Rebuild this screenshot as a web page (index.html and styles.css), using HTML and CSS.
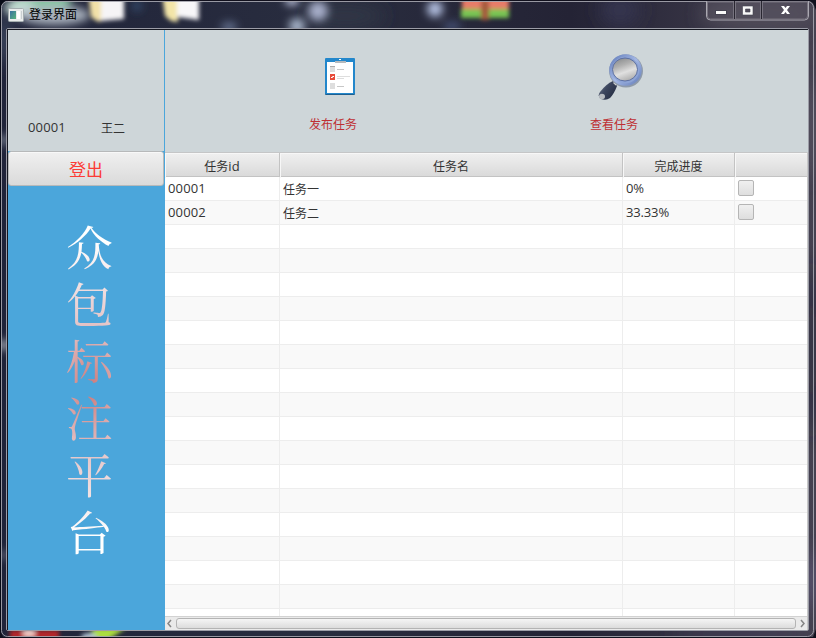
FILE: index.html
```html
<!DOCTYPE html>
<html lang="zh-CN">
<head>
<meta charset="utf-8">
<title>登录界面</title>
<link rel="stylesheet" href="styles.css">
</head>
<body>
<div class="window">
  <svg class="backdrop" width="816" height="638" viewBox="0 0 816 638">
    <defs>
      <filter id="b2" x="-50%" y="-50%" width="200%" height="200%"><feGaussianBlur stdDeviation="2"/></filter>
      <filter id="b4" x="-50%" y="-50%" width="200%" height="200%"><feGaussianBlur stdDeviation="4"/></filter>
      <filter id="b10" x="-50%" y="-100%" width="200%" height="300%"><feGaussianBlur stdDeviation="9"/></filter>
      <linearGradient id="bg"><stop offset="0" stop-color="#20243a"/><stop offset=".4" stop-color="#292d3f"/><stop offset=".7" stop-color="#242335"/><stop offset="1" stop-color="#454150"/></linearGradient>
    </defs>
    <rect width="816" height="638" fill="url(#bg)"/>
    <g filter="url(#b10)">
      <ellipse cx="620" cy="10" rx="20" ry="16" fill="#353450"/>
      <ellipse cx="760" cy="14" rx="60" ry="18" fill="#504b58"/>
      <ellipse cx="345" cy="16" rx="40" ry="10" fill="#303746"/>
      <ellipse cx="812" cy="130" rx="6" ry="50" fill="#5a5464"/>
      <ellipse cx="740" cy="634" rx="70" ry="5" fill="#45405c"/>
      <ellipse cx="812" cy="580" rx="6" ry="30" fill="#5f587b"/>
      <ellipse cx="4" cy="40" rx="6" ry="25" fill="#4c5870"/>
      <ellipse cx="812" cy="350" rx="5" ry="90" fill="#242235"/>
    </g>
    <g filter="url(#b4)">
      <ellipse cx="42" cy="0" rx="30" ry="10" fill="#7cc59a"/>
      <ellipse cx="20" cy="8" rx="16" ry="8" fill="#c6ded5"/>
      <ellipse cx="54" cy="15" rx="36" ry="10" fill="#b6bfca" opacity=".9"/>
      <circle cx="318" cy="11" r="10" fill="#a7afca"/>
      <circle cx="297" cy="26" r="8" fill="#a8b5ca"/>
      <circle cx="435" cy="9" r="8" fill="#b8c5e6"/>
      <ellipse cx="229" cy="27" rx="8" ry="5" fill="#64718f"/>
      <ellipse cx="292" cy="1" rx="7" ry="4" fill="#dce3ff"/>
      <ellipse cx="452" cy="26" rx="9" ry="4" fill="#48557b"/>
      <circle cx="137" cy="6" r="5" fill="#344e70"/>
      <circle cx="4" cy="345" r="5" fill="#c0c5cd"/>
      <circle cx="4" cy="140" r="5" fill="#818a9a"/>
      <circle cx="4" cy="555" r="4" fill="#777c8d"/>
    </g>
    <g filter="url(#b2)">
      <path d="M88 -6h17v26l-7 2-7-5z" fill="#f2e1a8"/>
      <path d="M101 -6h23v25l-23 2z" fill="#f6f4f6"/>
      <path d="M162 -6h16v28l-7-1-6-5z" fill="#f3e5a8"/>
      <path d="M177 -6h22v26l-22-3z" fill="#f8f7f9"/>
      <rect x="462" y="-4" width="47" height="14" fill="#e87b69"/>
      <rect x="461" y="9" width="48" height="9" fill="#79c553"/>
      <rect x="481" y="0" width="8" height="20" fill="#a45a3e"/>
      <rect x="10" y="630" width="49" height="10" fill="#b3282a"/>
      <ellipse cx="29" cy="633" rx="7" ry="4" fill="#f2cbc5"/>
      <path d="M83 640l12-12h31l-18 12z" fill="#acdd3f"/>
      <ellipse cx="89" cy="637" rx="8" ry="4" fill="#afc1d2"/>
    </g>
    <rect x="0" y="0" width="816" height="1" fill="#11101d"/>
    <path d="M0 0h6L1 6v632H0z" fill="#080b17"/>
    <path d="M0 638v-8l3 7h810l3-8v9zM816 0v10l-3-7-5-3z" fill="#10101d"/>
    <rect x="1.5" y="1.5" width="812" height="635" rx="6" fill="none" stroke="#a5a5ae" opacity=".9"/>
    <rect x="6.5" y="28.5" width="802" height="602" rx="1.5" fill="none" stroke="#9c9da7"/>
    <rect x="7.5" y="29.5" width="800" height="600" fill="none" stroke="#151720"/>
  </svg>

  <header class="titlebar">
    <svg class="app-icon" width="16" height="14" viewBox="0 0 16 14">
      <defs><linearGradient id="ai" x2="1" y2="1"><stop stop-color="#3971a1"/><stop offset="1" stop-color="#56b47c"/></linearGradient></defs>
      <rect x=".5" y=".5" width="15" height="13" rx="1" fill="#e9ecec" stroke="#a5aeb0"/>
      <rect x="2" y="3" width="6" height="8" fill="url(#ai)"/>
      <path d="M9 3h3v8H9z" fill="#fff"/><path d="M13 3h1v8h-1z" fill="#c9cfd1"/>
    </svg>
    <span class="title">登录界面</span>
    <svg class="controls" width="106" height="22" viewBox="0 0 106 22">
      <path d="M1.500 1v15q0 4 4 4h94q4 0 4-4V1" fill="#5c5665" fill-opacity=".35" stroke="#aaa8b1"/>
      <path d="M2.500 2v14q0 3 3 3h23V2zM30.500 2v17h25V2zM57.500 2v17h42q3 0 3-3V2z" fill="none" stroke="#77737f"/>
      <path d="M29.500 1v18M56.500 1v18" stroke="#292631"/>
      <rect x="10.500" y="10.500" width="11" height="4" fill="#f8f8f8" stroke="#454351"/>
      <path d="M37.500 6h10.500v9H37.500zm3 3v3h4.500V9z" fill="#f8f8f8" fill-rule="evenodd" stroke="#454351" stroke-width=".6"/>
      <path d="M76 6h3l1.500 2L82 6h3l-3 4 3 4h-3l-1.500-2-1.500 2h-3l3-4z" fill="#fff"/>
    </svg>
  </header>

  <main class="client">
    <aside class="sidebar">
      <div class="user"><span class="num">00001</span><span>王二</span></div>
      <button class="logout">登出</button>
      <div class="brand"><div class="brand-text">众包标注平台</div></div>
    </aside>
    <section class="content">
      <nav class="toolbar">
        <div class="action publish">
          <svg width="30" height="38" viewBox="0 0 30 38">
            <rect width="30" height="36" rx="1" y="1" fill="#1d5f90"/>
            <rect width="30" height="36" rx="1" fill="#2387cb"/>
            <path d="M2 4h26v31H2z" fill="#fff"/>
            <path d="M10 3h11v2H10z" fill="#b6babd"/><path d="M14 1h2v1h-2z" fill="#fff"/>
            <path d="M5 8h5v6H5zM5 25h5v6H5z" fill="#dedede"/><path d="M5 8h5v1H5z" fill="#aaa"/>
            <path d="M5 16h5v6H5z" fill="#e74c3c"/><path d="M6 19.500h1.500v-1H9" fill="none" stroke="#fff"/>
            <path d="M12 11h7v1h-7zM12 28h7v1h-7z" fill="#c7c7c7"/><path d="M12 18h13v1H12zM12 20h7v1h-7z" fill="#dedede"/>
          </svg>
          <span>发布任务</span>
        </div>
        <div class="action view">
          <svg width="46" height="48" viewBox="0 0 46 48">
            <defs>
              <linearGradient id="ring" x2="1" y2="1"><stop stop-color="#627dbc"/><stop offset=".5" stop-color="#a5b8e4"/><stop offset="1" stop-color="#647eba"/></linearGradient>
              <linearGradient id="lens" x1=".3" x2=".7" y2="1"><stop stop-color="#8b8d8f"/><stop offset=".3" stop-color="#b0b0b0"/><stop offset=".6" stop-color="#e0e0e0"/><stop offset="1" stop-color="#a9a9a9"/></linearGradient>
              <linearGradient id="handle" x2="1" y2=".7"><stop stop-color="#8790a3"/><stop offset=".45" stop-color="#3d475f"/><stop offset="1" stop-color="#252d42"/></linearGradient>
            </defs>
            <path d="M15 28l4 5q-3 8-7 12-4 3-9 1-4-3-1-7 6-8 13-11z" fill="url(#handle)"/>
            <ellipse cx="4" cy="43.500" rx="3" ry="2.700" fill="#b7bbc0"/>
            <path d="M16 29l2.500 2.500" stroke="#d4d4d4" stroke-width="2.500"/>
            <ellipse cx="28" cy="18" rx="17" ry="16.500" fill="#8e9aa9"/>
            <ellipse cx="27.500" cy="17" rx="15" ry="14.500" fill="#8da4d6" stroke="url(#ring)" stroke-width="2.500"/>
            <ellipse cx="27" cy="16.500" rx="12.500" ry="11.500" fill="url(#lens)" stroke="#5c70a3" stroke-width="1"/>
          </svg>
          <span>查看任务</span>
        </div>
      </nav>
      <div class="table">
        <div class="row head"><div>任务<span class="num">id</span></div><div>任务名</div><div>完成进度</div><div></div></div>
        <div class="rows">
          <div class="row"><div class="num">00001</div><div>任务一</div><div class="num pct">0%</div><div><i class="check"></i></div></div>
          <div class="row"><div class="num">00002</div><div>任务二</div><div class="num pct">33.33%</div><div><i class="check"></i></div></div>
          <div class="row"><div></div><div></div><div></div><div></div></div>
          <div class="row"><div></div><div></div><div></div><div></div></div>
          <div class="row"><div></div><div></div><div></div><div></div></div>
          <div class="row"><div></div><div></div><div></div><div></div></div>
          <div class="row"><div></div><div></div><div></div><div></div></div>
          <div class="row"><div></div><div></div><div></div><div></div></div>
          <div class="row"><div></div><div></div><div></div><div></div></div>
          <div class="row"><div></div><div></div><div></div><div></div></div>
          <div class="row"><div></div><div></div><div></div><div></div></div>
          <div class="row"><div></div><div></div><div></div><div></div></div>
          <div class="row"><div></div><div></div><div></div><div></div></div>
          <div class="row"><div></div><div></div><div></div><div></div></div>
          <div class="row"><div></div><div></div><div></div><div></div></div>
          <div class="row"><div></div><div></div><div></div><div></div></div>
          <div class="row"><div></div><div></div><div></div><div></div></div>
          <div class="row"><div></div><div></div><div></div><div></div></div>
          <div class="row"><div></div><div></div><div></div><div></div></div>
        </div>
        <div class="scrollbar">
          <svg width="10" height="13" viewBox="0 0 10 13"><path d="M6 3L3 6.500 6 10" fill="none" stroke="#858585" stroke-width="1.500"/></svg>
          <div class="thumb"></div>
          <svg width="10" height="13" viewBox="0 0 10 13"><path d="M4 3l3 3.500L4 10" fill="none" stroke="#858585" stroke-width="1.500"/></svg>
        </div>
      </div>
    </section>
  </main>
</div>
</body>
</html>
```
FILE: styles.css
```css
* { box-sizing: border-box; }
body {
  margin: 0;
  overflow: hidden;
  font: 12px/16px "Noto Sans CJK SC", sans-serif;
  color: #333;
}
.window { position: relative; width: 816px; height: 638px; padding: 0 8px; overflow: hidden; }
.backdrop { position: absolute; left: 0; top: 0; }
.titlebar { position: relative; height: 30px; display: flex; align-items: flex-start; }
.app-icon { margin-top: 8px; }
.title { margin: 6px 0 0 5px; color: #000; }
.controls { margin-left: auto; margin-right: -3px; }
.num { font-family: "Open Sans", "Noto Sans", sans-serif; font-size: 13px; letter-spacing: .15px; }
.pct { letter-spacing: -.15px; }

.client { position: relative; display: flex; width: 800px; height: 600px; background: #ced6d9; }
.sidebar { width: 157px; display: flex; flex-direction: column; background: #4ba6db; }
.user { width: 156px; height: 121px; padding: 90px 0 0 20px; background: #ced6d9; display: flex; }
.user .num { width: 73px; margin-top: -1px; }
.logout {
  width: 156px;
  height: 35px;
  padding: 0;
  border: 1px solid #b7b9ba;
  border-radius: 3px;
  background: linear-gradient(#f0f0f0, #dadada);
  box-shadow: inset 0 1px #f8f8f8;
  font: 17px/30px "Noto Sans CJK SC", sans-serif;
  color: #fc3b36;
}
.brand { flex: 1; padding: 38px 0 0 57px; }
.brand-text {
  width: 48px;
  height: 342px;
  writing-mode: vertical-rl;
  white-space: nowrap;
  font: 400 47px/48px "Noto Serif CJK SC", "Noto Sans CJK SC", serif;
  letter-spacing: 10px;
  color: transparent;
  background: radial-gradient(ellipse 100px 165px at 52% 48%, #cb7777, #e4c4c7 40%, #fff 90%);
  -webkit-background-clip: text;
  background-clip: text;
}

.content { width: 643px; display: flex; flex-direction: column; }
.toolbar { height: 122px; display: flex; }
.action { display: flex; flex-direction: column; align-items: center; color: #be3034; }
.action span { margin-top: auto; margin-bottom: 20px; }
.publish { width: 48px; margin-left: 144px; padding-top: 28px; }
.publish svg { margin-left: 14px; }
.view { width: 48px; margin-left: 233px; padding-top: 23px; }
.view svg { margin-left: 14px; }

.table { height: 478px; background: #fff; border-right: 1px solid #c8c8c8; display: flex; flex-direction: column; }
.row { display: grid; grid-template-columns: 115px 343px 112px 1fr; height: 24px; flex: none; border-bottom: 1px solid #ededed; }
.row > div { border-right: 1px solid #ededed; padding-left: 3px; line-height: 23px; white-space: nowrap; }
.row > div:last-child { border-right: 0; }
.row:nth-child(even) { background: #f9f9f9; }
.head { height: 25px; border-top: 1px solid #c5c6c7; border-bottom-color: #c3c3c3; background: linear-gradient(#f0f0f0, #dadada); }
.head > div { padding: 1px 0 0; text-align: center; border-right-color: #c3c3c3; line-height: 24px; box-shadow: inset 1px 1px #f7f7f7; }
.rows { height: 439px; overflow: hidden; }
.check { display: block; width: 16px; height: 16px; margin-top: 3px; border: 1px solid #b5b5b5; border-radius: 2px; background: linear-gradient(#f0f0f0, #dedede); }
.scrollbar { height: 14px; display: flex; background: #eaeaea; border-top: 1px solid #d2d2d2; }
.thumb { flex: 1; height: 11px; margin: 1px 1px 0; border: 1px solid #b4b4b4; border-radius: 3px; background: linear-gradient(#f5f5f5, #dcdcdc); }
```
